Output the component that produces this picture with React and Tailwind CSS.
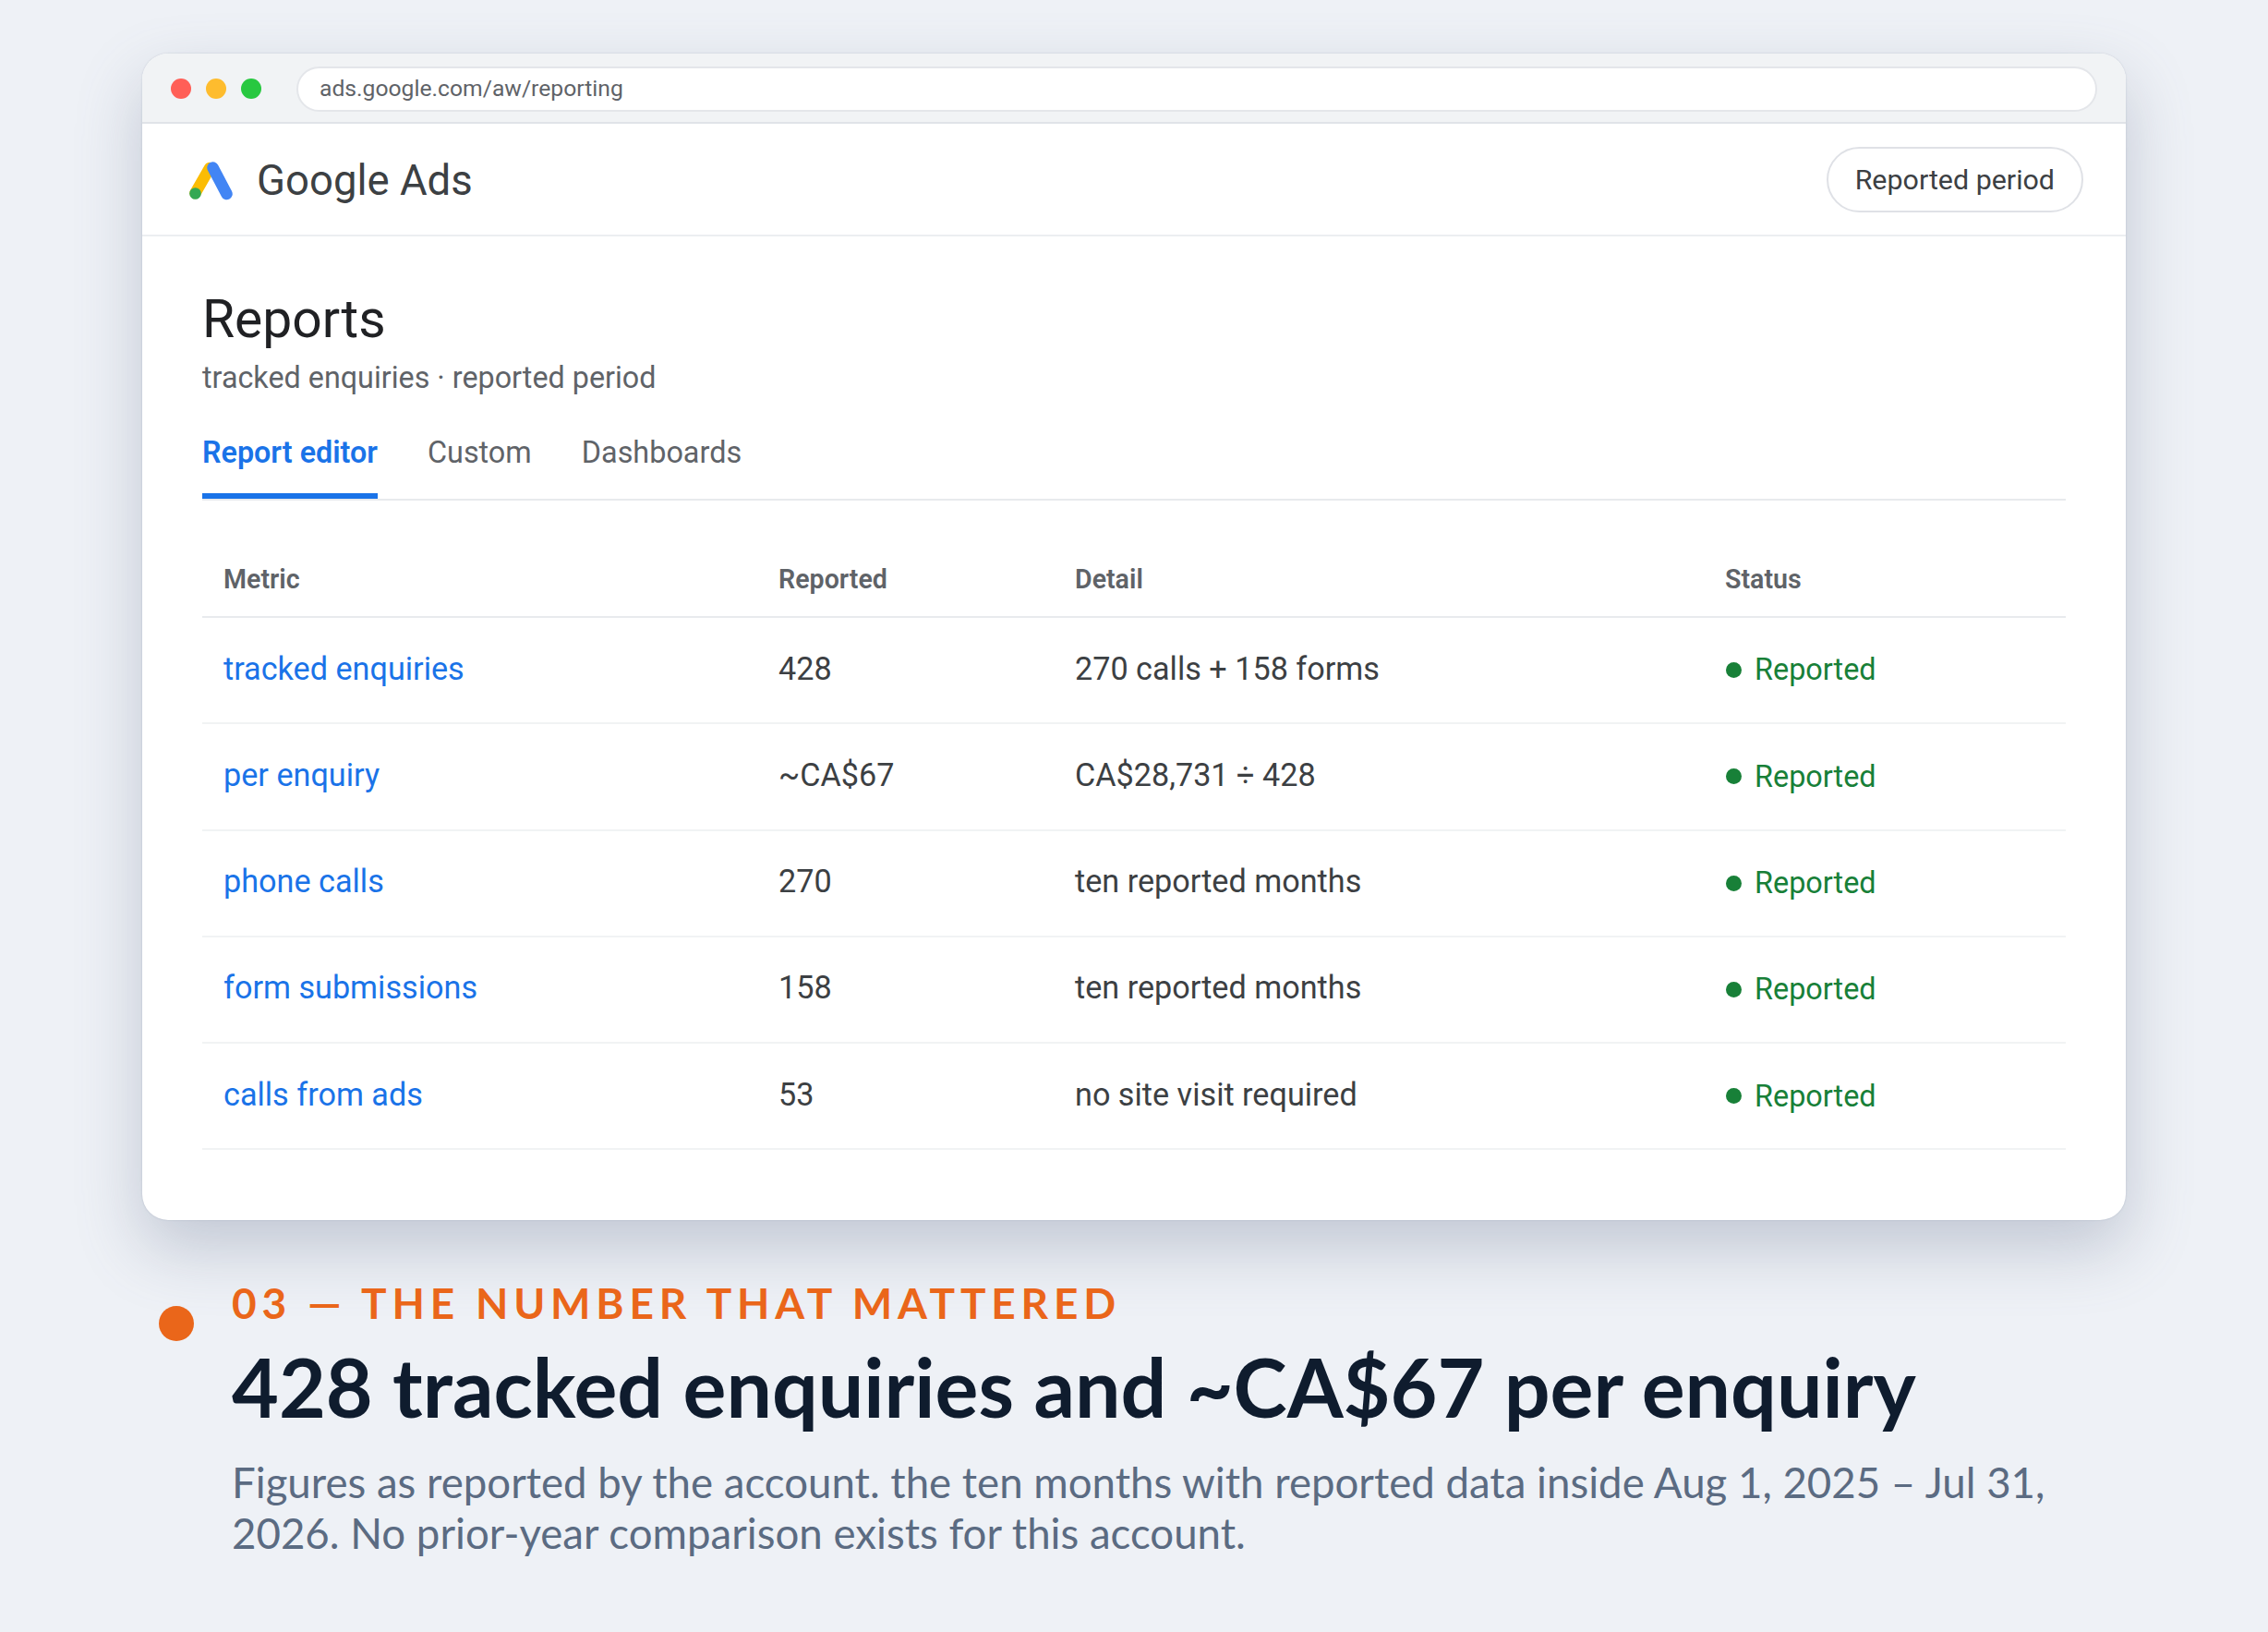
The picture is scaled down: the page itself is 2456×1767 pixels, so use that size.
const rows = [
  { metric: 'tracked enquiries', value: '428', detail: '270 calls + 158 forms' },
  { metric: 'per enquiry', value: '~CA$67', detail: 'CA$28,731 ÷ 428' },
  { metric: 'phone calls', value: '270', detail: 'ten reported months' },
  { metric: 'form submissions', value: '158', detail: 'ten reported months' },
  { metric: 'calls from ads', value: '53', detail: 'no site visit required' },
];

function AdsLogo() {
  return (
    <svg width="48" height="42" viewBox="0 0 48 42" fill="none">
      <path d="M22 7 L6.5 34" stroke="#fbbc04" strokeWidth="12.5" strokeLinecap="round" />
      <path d="M25.5 6.5 L40.5 35" stroke="#4285f4" strokeWidth="12.5" strokeLinecap="round" />
      <circle cx="6.5" cy="34.5" r="6.3" fill="#34a853" />
    </svg>
  );
}

export default function App() {
  return (
    <div className="w-[2456px] h-[1767px] bg-[#eef1f6] pt-[58px] px-[154px] overflow-hidden font-['Roboto',sans-serif]">
      {/* browser window */}
      <div className="w-[2148px] h-[1263px] bg-white rounded-[28px] overflow-hidden shadow-[0_30px_70px_rgba(100,112,140,0.32),0_0_2px_rgba(100,112,140,0.3)]">
        <div className="h-[76px] bg-[#f1f3f5] border-b-2 border-[#e0e3e8] flex items-center pt-[2px] pl-[31px] pr-[31px]">
          <div className="flex gap-[16px] shrink-0">
            <span className="w-[22px] h-[22px] rounded-full bg-[#ff5f57]" />
            <span className="w-[22px] h-[22px] rounded-full bg-[#febc2e]" />
            <span className="w-[22px] h-[22px] rounded-full bg-[#28c840]" />
          </div>
          <div className="ml-[38px] flex-1 h-[49px] bg-white rounded-full border-2 border-[#e4e6ea] flex items-center pl-[23px] text-[24.7px] text-[#5f6368]">
            ads.google.com/aw/reporting
          </div>
        </div>

        <div className="h-[122px] border-b-2 border-[#eceef1] flex items-center justify-between pl-[51px] pr-[46px]">
          <div className="flex items-center gap-[25px] mt-[4px]">
            <AdsLogo />
            <span className="text-[45.5px] leading-none text-[#3c4043]">Google Ads</span>
          </div>
          <div className="h-[71px] px-[29px] pt-[2px] rounded-full border-2 border-[#dfe1e6] flex items-center text-[30.4px] text-[#3c4043]">
            Reported period
          </div>
        </div>

        <div className="px-[65px] pt-[57px]">
          <h1 className="text-[57px] leading-[66px] font-normal text-[#202124]">Reports</h1>
          <p className="text-[32.3px] leading-[44px] mt-[8px] text-[#5f6368]">tracked enquiries · reported period</p>

          <div className="flex gap-[54px] border-b-2 border-[#e8eaed] mt-[22px] h-[89px] text-[32.4px] text-[#5f6368]">
            <span className="h-[87px] pt-[13px] text-[32.3px] font-semibold text-[#1a73e8] border-b-[6px] border-[#1a73e8]">Report editor</span>
            <span className="pt-[13px]">Custom</span>
            <span className="pt-[13px]">Dashboards</span>
          </div>

          <div className="grid grid-cols-[601px_320px_705px_390px] h-[127px] pt-[65px] border-b-2 border-[#e8eaed] text-[28.6px] leading-[40px] font-semibold text-[#5f6368]">
            <span className="pl-[23px]">Metric</span>
            <span className="pl-[23px]">Reported</span>
            <span className="pl-[24px]">Detail</span>
            <span className="pl-[23px]">Status</span>
          </div>

          {rows.map((r) => (
            <div key={r.metric} className="grid grid-cols-[601px_320px_705px_390px] items-center h-[115.3px] pb-[3px] border-b-2 border-[#f1f3f4] text-[34.2px] text-[#3c4043]">
              <span className="pl-[23px] text-[#1a73e8]">{r.metric}</span>
              <span className="pl-[23px]">{r.value}</span>
              <span className="pl-[24px]">{r.detail}</span>
              <span className="pl-[24px] flex items-center gap-[14px] text-[32.4px] text-[#188038] pt-[3px]">
                <span className="w-[17px] h-[17px] rounded-full bg-[#188038]" />
                Reported
              </span>
            </div>
          ))}
        </div>
      </div>

      {/* caption */}
      <div className="flex font-['Lato',sans-serif] mt-[62px] -ml-[136px] pl-[154px] relative">
        <span className="absolute left-[154px] top-[31px] w-[38px] h-[38px] rounded-full bg-[#ea661a]" />
        <div className="pl-[79px]">
          <div className="text-[46px] leading-[56px] font-bold tracking-[5.8px] text-[#ea661a]">03 — THE NUMBER THAT MATTERED</div>
          <h2 className="text-[87.8px] leading-[104px] font-bold text-[#0f1c2e] mt-[10px]">428 tracked enquiries and ~CA$67 per enquiry</h2>
          <p className="text-[45.6px] leading-[55px] text-[#5b6b82] mt-[24px] w-[2000px]">
            Figures as reported by the account. the ten months with reported data inside Aug 1, 2025 – Jul 31, 2026. No prior-year comparison exists for this account.
          </p>
        </div>
      </div>
    </div>
  );
}
